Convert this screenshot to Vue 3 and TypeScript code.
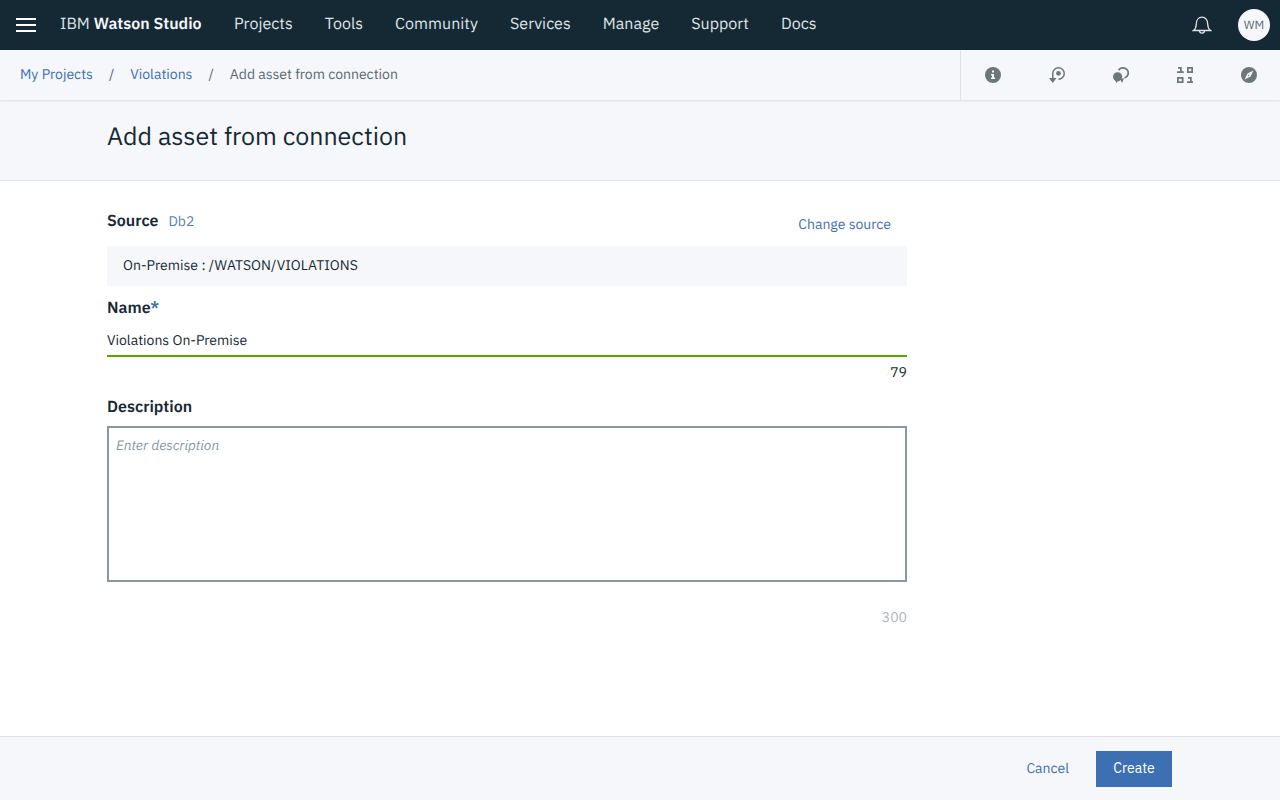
<script setup lang="ts">
const nav: string[] = ['Projects', 'Tools', 'Community', 'Services', 'Manage', 'Support', 'Docs']
</script>

<template>
  <div class="page">
    <header class="top">
      <div class="burger"><span></span><span></span><span></span></div>
      <div class="brand">IBM <b>Watson Studio</b></div>
      <nav class="nav"><a v-for="n in nav" :key="n">{{ n }}</a></nav>
      <svg class="bell" width="20" height="20" viewBox="0 0 20 20" fill="none" stroke="#dfe3e6" stroke-width="1.3">
        <path d="M1.500 15.500c2-1.500 2.800-3.300 2.800-6.500 0-4 2.300-6.800 5.700-6.800s5.700 2.800 5.700 6.800c0 3.200.8 5 2.800 6.500z" />
        <path d="M7.500 15.800c0 3 5 3 5 0" />
      </svg>
      <div class="avatar">WM</div>
    </header>
    <div class="crumbs">
      <div class="trail">
        <a>My Projects</a><i>/</i><a>Violations</a><i>/</i><span>Add asset from connection</span>
      </div>
      <div class="tools">
        <svg width="16" height="16" viewBox="0 0 16 16" fill="#6d7777">
          <path fill-rule="evenodd" d="M8 0a8 8 0 1 1 0 16A8 8 0 0 1 8 0zM7 3.500v2h2v-2zM6 7v1.400h1v2.200H6V12h4v-1.400H9V7z" />
        </svg>
        <svg width="16" height="16" viewBox="0 0 16 16" fill="none">
          <path d="M3.750 11V6.500A5.750 5.750 0 1 1 9.500 12.250" stroke="#6d7777" stroke-width="1.500" />
          <circle cx="9.500" cy="6.300" r="2.400" fill="#6d7777" />
          <path d="M0 11h7.500l-3.750 5z" fill="#6d7777" />
        </svg>
        <svg width="16" height="16" viewBox="0 0 16 16" fill="none">
          <path d="M5.600 3.300A5.200 5.200 0 1 1 11.500 11" stroke="#6d7777" stroke-width="1.700" />
          <circle cx="4.600" cy="9.800" r="4.600" fill="#6d7777" />
          <path d="M2 13h3l-1.500 3zM7 11.500h4l-2 4.500z" fill="#6d7777" />
        </svg>
        <svg width="16" height="16" viewBox="0 0 16 16" fill="#6d7777">
          <path fill-rule="evenodd" d="M1 0h3.750v4.250h2V6H0V4.250h3V1.750H1zM10 0h6v6h-6zM11.750 1.750v2.500h2.500v-2.500zM0 10h6.500v6H0zM1.750 11.750v2.500h3v-2.500zM11 10h3.750v4.250H16V16h-6v-1.750h3v-2.500h-2z" />
        </svg>
        <svg width="16" height="16" viewBox="0 0 16 16" fill="#6d7777">
          <path fill-rule="evenodd" d="M8 0a8 8 0 1 1 0 16A8 8 0 0 1 8 0zM12.500 3.500L6.500 6.500 3.500 12.500 9.500 9.500zM7.500 7.500l1 1-2 1z" />
        </svg>
      </div>
    </div>
    <div class="title"><h1>Add asset from connection</h1></div>
    <main class="form">
      <div class="src-row">
        <div class="src-left"><b>Source</b><span class="db">Db2</span></div>
        <a class="change">Change source</a>
      </div>
      <div class="path">On-Premise : /WATSON/VIOLATIONS</div>
      <label class="lbl name-lbl">Name<em>*</em></label>
      <div class="input">Violations On-Premise</div>
      <div class="count">79</div>
      <label class="lbl desc-lbl">Description</label>
      <div class="area">Enter description</div>
      <div class="count muted">300</div>
    </main>
    <footer class="foot"><a>Cancel</a><button>Create</button></footer>
  </div>
</template>

<style>
body { margin: 0; }
</style>
<style scoped>
.page { width: 1280px; height: 800px; display: flex; flex-direction: column; font-family: "IBM Plex Sans", "Open Sans", sans-serif; font-size: 14px; color: #152935; background: #fff; overflow: hidden; text-rendering: geometricPrecision; }
.top { height: 50px; background: #152935; color: #dfe3e6; display: flex; align-items: center; flex: none; }
.burger { margin-left: 16px; width: 20px; display: flex; flex-direction: column; gap: 4px; }
.burger span { height: 2px; background: #fff; }
.brand { margin: 0 0 3px 24px; font-size: 16px; width: 174px; }
.brand b { color: #f5f7fa; font-weight: 600; }
.nav { display: flex; gap: 32px; font-size: 16px; margin-bottom: 3px; letter-spacing: .03px; }
.bell { margin-left: auto; }
.avatar { margin: 0 10px 0 26px; width: 32px; height: 32px; border-radius: 50%; background: #f5f7fa; color: #5a6872; font-size: 12px; display: flex; align-items: center; justify-content: center; }
.crumbs { height: 50px; background: #f5f7fa; box-shadow: 0 1px 2px rgba(21, 41, 53, .12); position: relative; display: flex; flex: none; }
.trail { flex: 1; display: flex; align-items: center; padding: 0 0 2px 20px; }
.trail a { color: #3d70b2; }
.trail span { color: #5a6872; }
.trail i { font-style: normal; margin: 0 16px; color: #5a6872; }
.tools { width: 320px; padding-left: 24px; box-sizing: border-box; border-left: 1px solid #dfe3e6; display: flex; align-items: center; gap: 48px; }
.title { height: 81px; box-sizing: border-box; background: #f5f7fa; border-bottom: 1px solid #dfe3e6; flex: none; display: flex; align-items: center; padding: 0 0 9px 107px; }
h1 { margin: 0; font-size: 25px; font-weight: 400; }
.form { flex: 1; width: 800px; margin-left: 107px; }
.src-row { display: flex; justify-content: space-between; align-items: flex-start; padding: 30px 16px 0 0; height: 35px; }
.src-left { font-size: 16px; line-height: 20px; }
.src-left b { font-weight: 600; }
.db { color: #5a7fae; margin-left: 10px; font-size: 14px; }
.change { color: #3d70b2; margin-top: 4px; }
.path { background: #f5f7fa; height: 40px; line-height: 38px; padding-left: 16px; letter-spacing: .03px; }
.lbl { display: block; font-weight: 600; font-size: 16px; }
.name-lbl { margin-top: 12px; }
.lbl em { color: #3d70b2; font-style: normal; }
.input { margin-top: 11px; height: 24px; padding-top: 2px; border-bottom: 2px solid #5aa700; }
.count { text-align: right; margin-top: 6px; }
.count.muted { color: #aeb6bc; margin-top: 26px; }
.desc-lbl { margin-top: 16px; }
.area { margin-top: 9px; height: 156px; border: 2px solid #8897a2; padding: 8px 7px; box-sizing: border-box; font-style: italic; font-size: 13.75px; color: #8897a2; }
.foot { height: 63px; background: #f5f7fa; border-top: 1px solid #dfe3e6; display: flex; align-items: center; justify-content: flex-end; padding-right: 108px; gap: 27px; flex: none; }
.foot a { color: #3d70b2; padding-bottom: 2px; }
.foot button { width: 76px; height: 36px; background: #3d70b2; color: #fff; border: 0; font: inherit; padding-bottom: 2px; }
</style>
